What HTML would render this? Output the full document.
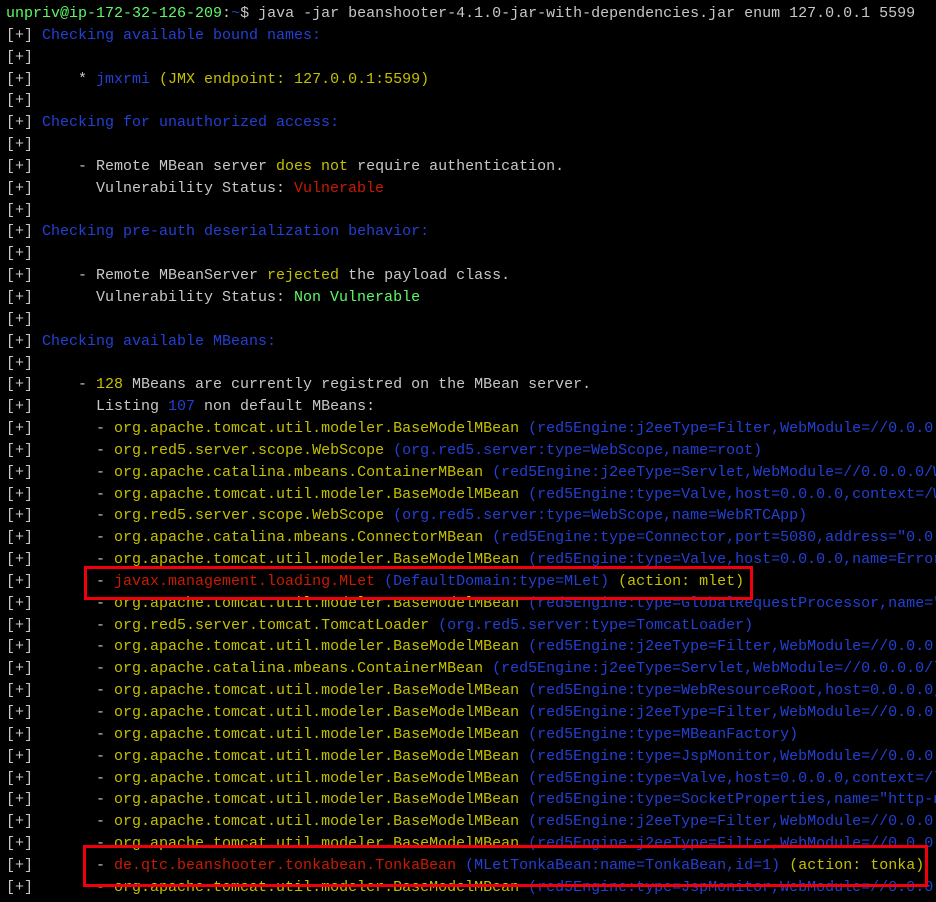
<!DOCTYPE html>
<html><head><meta charset="utf-8"><style>
html,body{margin:0;padding:0;background:#000;width:936px;height:902px;overflow:hidden}
pre{margin:0;padding:3px 0 0 6px;box-sizing:border-box;width:936px;height:902px;overflow:hidden;font-family:"Liberation Mono",monospace;font-size:15px;line-height:21.85px;color:#c7c7c7;white-space:pre}
.g{color:#5ff967}.b{color:#2340d4}.y{color:#c4c000}.r{color:#c91b00}
.box{position:absolute;border:3px solid #f0000a;box-sizing:border-box}
</style></head><body>
<pre><span class="g">unpriv@ip-172-32-126-209</span>:<span class="b">~</span>$ java -jar beanshooter-4.1.0-jar-with-dependencies.jar enum 127.0.0.1 5599
[+] <span class="b">Checking available bound names:</span>
[+]
[+]     * <span class="b">jmxrmi</span> <span class="y">(JMX endpoint: 127.0.0.1:5599)</span>
[+]
[+] <span class="b">Checking for unauthorized access:</span>
[+]
[+]     - Remote MBean server <span class="y">does not</span> require authentication.
[+]       Vulnerability Status: <span class="r">Vulnerable</span>
[+]
[+] <span class="b">Checking pre-auth deserialization behavior:</span>
[+]
[+]     - Remote MBeanServer <span class="y">rejected</span> the payload class.
[+]       Vulnerability Status: <span class="g">Non Vulnerable</span>
[+]
[+] <span class="b">Checking available MBeans:</span>
[+]
[+]     - <span class="y">128</span> MBeans are currently registred on the MBean server.
[+]       Listing <span class="b">107</span> non default MBeans:
[+]       - <span class="y">org.apache.tomcat.util.modeler.BaseModelMBean</span> <span class="b">(red5Engine:j2eeType=Filter,WebModule=//0.0.0.0/WebRTCApp)</span>
[+]       - <span class="y">org.red5.server.scope.WebScope</span> <span class="b">(org.red5.server:type=WebScope,name=root)</span>
[+]       - <span class="y">org.apache.catalina.mbeans.ContainerMBean</span> <span class="b">(red5Engine:j2eeType=Servlet,WebModule=//0.0.0.0/WebRTCApp)</span>
[+]       - <span class="y">org.apache.tomcat.util.modeler.BaseModelMBean</span> <span class="b">(red5Engine:type=Valve,host=0.0.0.0,context=/WebRTCApp)</span>
[+]       - <span class="y">org.red5.server.scope.WebScope</span> <span class="b">(org.red5.server:type=WebScope,name=WebRTCApp)</span>
[+]       - <span class="y">org.apache.catalina.mbeans.ConnectorMBean</span> <span class="b">(red5Engine:type=Connector,port=5080,address="0.0.0.0")</span>
[+]       - <span class="y">org.apache.tomcat.util.modeler.BaseModelMBean</span> <span class="b">(red5Engine:type=Valve,host=0.0.0.0,name=ErrorReportValve)</span>
[+]       - <span class="r">javax.management.loading.MLet</span> <span class="b">(DefaultDomain:type=MLet)</span> <span class="y">(action: mlet)</span>
[+]       - <span class="y">org.apache.tomcat.util.modeler.BaseModelMBean</span> <span class="b">(red5Engine:type=GlobalRequestProcessor,name="http-nio")</span>
[+]       - <span class="y">org.red5.server.tomcat.TomcatLoader</span> <span class="b">(org.red5.server:type=TomcatLoader)</span>
[+]       - <span class="y">org.apache.tomcat.util.modeler.BaseModelMBean</span> <span class="b">(red5Engine:j2eeType=Filter,WebModule=//0.0.0.0/live)</span>
[+]       - <span class="y">org.apache.catalina.mbeans.ContainerMBean</span> <span class="b">(red5Engine:j2eeType=Servlet,WebModule=//0.0.0.0/live)</span>
[+]       - <span class="y">org.apache.tomcat.util.modeler.BaseModelMBean</span> <span class="b">(red5Engine:type=WebResourceRoot,host=0.0.0.0,context=/)</span>
[+]       - <span class="y">org.apache.tomcat.util.modeler.BaseModelMBean</span> <span class="b">(red5Engine:j2eeType=Filter,WebModule=//0.0.0.0/live)</span>
[+]       - <span class="y">org.apache.tomcat.util.modeler.BaseModelMBean</span> <span class="b">(red5Engine:type=MBeanFactory)</span>
[+]       - <span class="y">org.apache.tomcat.util.modeler.BaseModelMBean</span> <span class="b">(red5Engine:type=JspMonitor,WebModule=//0.0.0.0/live)</span>
[+]       - <span class="y">org.apache.tomcat.util.modeler.BaseModelMBean</span> <span class="b">(red5Engine:type=Valve,host=0.0.0.0,context=/live)</span>
[+]       - <span class="y">org.apache.tomcat.util.modeler.BaseModelMBean</span> <span class="b">(red5Engine:type=SocketProperties,name="http-nio")</span>
[+]       - <span class="y">org.apache.tomcat.util.modeler.BaseModelMBean</span> <span class="b">(red5Engine:j2eeType=Filter,WebModule=//0.0.0.0/live)</span>
[+]       - <span class="y">org.apache.tomcat.util.modeler.BaseModelMBean</span> <span class="b">(red5Engine:j2eeType=Filter,WebModule=//0.0.0.0/live)</span>
[+]       - <span class="r">de.qtc.beanshooter.tonkabean.TonkaBean</span> <span class="b">(MLetTonkaBean:name=TonkaBean,id=1)</span> <span class="y">(action: tonka)</span>
[+]       - <span class="y">org.apache.tomcat.util.modeler.BaseModelMBean</span> <span class="b">(red5Engine:type=JspMonitor,WebModule=//0.0.0.0/live)</span>
</pre>
<div class="box" style="left:84px;top:566px;width:669px;height:34px"></div>
<div class="box" style="left:83px;top:845px;width:845px;height:42px"></div>
</body></html>
